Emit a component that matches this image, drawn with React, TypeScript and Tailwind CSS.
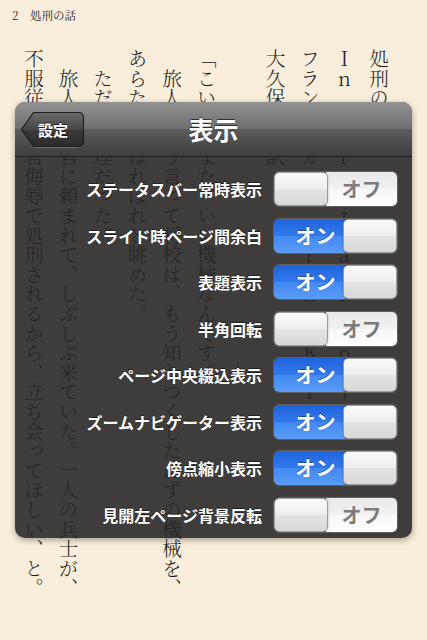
import type { ReactNode } from 'react';

const settings = [
  { label: 'ステータスバー常時表示', on: false },
  { label: 'スライド時ページ間余白', on: true },
  { label: '表題表示', on: true },
  { label: '半角回転', on: false },
  { label: 'ページ中央綴込表示', on: true },
  { label: 'ズームナビゲーター表示', on: true },
  { label: '傍点縮小表示', on: true },
  { label: '見開左ページ背景反転', on: false },
];

// page columns, right to left
const columns: ReactNode[] = [
  '処刑の機械',
  <span className="[text-orientation:upright]">In　der　Strafkolonie</span>,
  <>
    フランツ・カフカ　<span className="[text-orientation:upright]">Franz　Kafka</span>
  </>,
  '大久保ゆう訳',
  '　',
  '「こいつはまた、いい機械なんです。」',
  '　旅人にそう言って将校は、もう知りつくしたはずの機械を、',
  'あらためてほれぼれと眺めた。',
  '　ただ不条理だった。',
  '　旅人は長官に頼まれて、しぶしぶ来ていた。一人の兵士が、',
  '不服従と上官侮辱で処刑されるから、立ち会ってほしい、と。',
];

function Knob() {
  return (
    <div className="relative z-10 h-full w-[54px] shrink-0 rounded-[5px] border border-[#9c9c9c] bg-[linear-gradient(to_bottom,#fbfbfb,#eeeeee_50%,#e4e4e4_50%,#d8d8d8)] shadow-[0_0_2px_rgba(0,0,0,0.3)]" />
  );
}

function Toggle({ on }: { on: boolean }) {
  return (
    <div className="flex h-[36px] w-[125px] shrink-0 overflow-hidden rounded-[6px] border border-[#5f5f5f] font-['Noto_Sans_CJK_JP',sans-serif] text-[20px] font-bold leading-none">
      {on ? (
        <>
          <div className="-mr-[2px] flex flex-1 items-center justify-center pl-[12px] text-white [text-shadow:0_-1px_0_rgba(0,0,0,0.35)] bg-[linear-gradient(to_bottom,#1f63dc,#3479ec_50%,#4188f2_50%,#5a9cf6)]">
            オン
          </div>
          <Knob />
        </>
      ) : (
        <>
          <Knob />
          <div className="-ml-[2px] flex flex-1 items-center justify-center text-[#7c7c7c] bg-[linear-gradient(to_bottom,#e9e9e9,#f1f1f1_50%,#f8f8f8_50%,#fdfdfd)]">
            オフ
          </div>
        </>
      )}
    </div>
  );
}

function BackButton() {
  return (
    <div className="relative flex h-[39px] w-[65px] items-center pl-[18px]">
      <svg className="absolute inset-0" width="65" height="39" viewBox="0 0 65 39">
        <defs>
          <linearGradient id="back-fill" x1="0" y1="0" x2="0" y2="1">
            <stop offset="0" stopColor="#6a6a6a" />
            <stop offset="0.5" stopColor="#474747" />
            <stop offset="0.5" stopColor="#3a3a3a" />
            <stop offset="1" stopColor="#2b2b2b" />
          </linearGradient>
        </defs>
        <path
          d="M1.5 19.5 L13.5 2.5 H59 a4.5 4.5 0 0 1 4.5 4.5 V32 a4.5 4.5 0 0 1 -4.5 4.5 H13.5 Z"
          fill="url(#back-fill)"
          stroke="#1f1f1f"
          strokeWidth="1.2"
        />
        <path d="M14 37.6 H59" stroke="rgba(255,255,255,0.22)" strokeWidth="1" />
      </svg>
      <span className="relative font-['Noto_Sans_CJK_JP',sans-serif] text-[15px] font-bold leading-none text-white [text-shadow:0_-1px_0_rgba(0,0,0,0.6)]">
        設定
      </span>
    </div>
  );
}

export default function App() {
  return (
    <div className="relative h-[640px] w-full overflow-hidden bg-[#f9eedb] text-[#1c1c1c]">
      <p className="pl-[12px] pt-[7px] font-['Noto_Serif_CJK_JP','Noto_Sans_CJK_JP',serif] text-[11.5px] leading-[16px]">
        2　処刑の話
      </p>

      <div className="ml-[16px] mt-[26px] h-[560px] w-[379.5px] font-['Noto_Serif_CJK_JP','Noto_Sans_CJK_JP',serif] text-[19.6px] font-light leading-[34.5px] [writing-mode:vertical-rl]">
        {columns.map((c, i) => (
          <p key={i} className="whitespace-nowrap">
            {c}
          </p>
        ))}
      </div>

      <div className="absolute left-[15px] top-[102px] w-[397px] overflow-hidden rounded-[10px] bg-[rgba(36,36,38,0.88)] shadow-[0_2px_6px_rgba(0,0,0,0.35)]">
        <div className="grid h-[55px] grid-cols-[1fr_auto_1fr] items-center border-b border-[#1e1e1e] bg-[linear-gradient(to_bottom,#929292,#6e6e6e_50%,#5c5c5c_50%,#3e3e3e)] px-[5px]">
          <div className="pt-[1px]">
            <BackButton />
          </div>
          <h1 className="font-['Noto_Sans_CJK_JP',sans-serif] text-[25px] font-bold leading-none text-white [text-shadow:0_-1px_0_rgba(0,0,0,0.6)]">
            表示
          </h1>
          <div />
        </div>

        <div className="pt-[9px]">
          {settings.map((s) => (
            <div key={s.label} className="flex h-[46.5px] items-center justify-end gap-[11px] pr-[14px]">
              <span className="font-['Noto_Sans_CJK_JP',sans-serif] text-[16px] font-bold leading-none text-white [text-shadow:0_-1px_0_rgba(0,0,0,0.5)]">
                {s.label}
              </span>
              <Toggle on={s.on} />
            </div>
          ))}
        </div>
      </div>
    </div>
  );
}
